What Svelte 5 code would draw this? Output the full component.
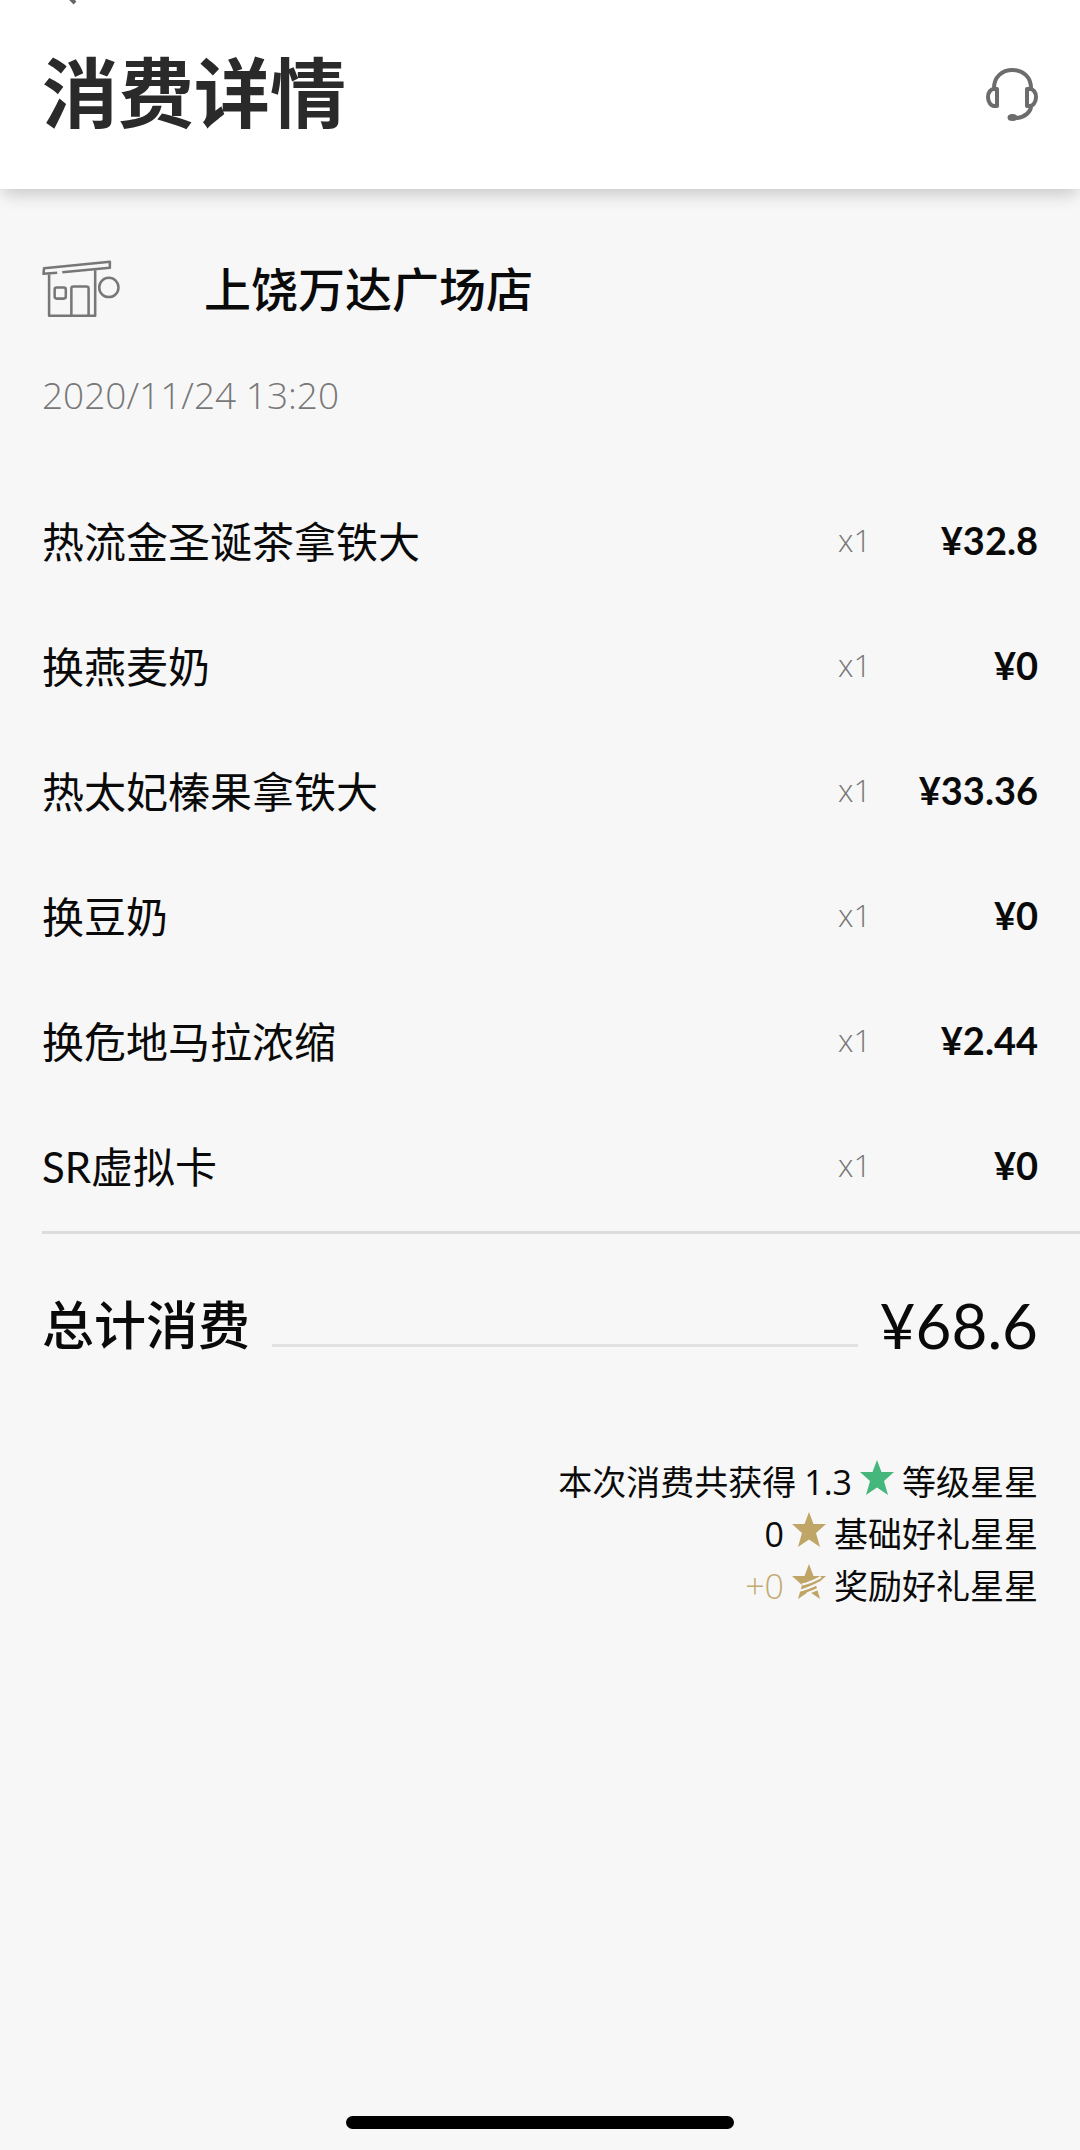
<script>
  const items = [
    { name: '热流金圣诞茶拿铁大', count: 'x1', price: '¥32.8' },
    { name: '换燕麦奶', count: 'x1', price: '¥0' },
    { name: '热太妃榛果拿铁大', count: 'x1', price: '¥33.36' },
    { name: '换豆奶', count: 'x1', price: '¥0' },
    { name: '换危地马拉浓缩', count: 'x1', price: '¥2.44' },
    { name: 'SR虚拟卡', count: 'x1', price: '¥0' }
  ];
  const rewards = [
    { text: '本次消费共获得', amount: '1.3', kind: 'level', label: '等级星星' },
    { text: '', amount: '0', kind: 'base', label: '基础好礼星星' },
    { text: '', amount: '+0', kind: 'bonus', label: '奖励好礼星星' }
  ];
</script>

<div class="page">
  <header>
    <button class="back" aria-label="返回">
      <svg width="16" height="6" viewBox="0 0 16 6" fill="none" stroke="#666" stroke-width="4"><path d="M1 -5 9 3" /></svg>
    </button>
    <div class="bar">
      <h1>消费详情</h1>
      <button class="help" aria-label="客服">
        <svg width="52" height="54" viewBox="0 0 52 54" fill="none" stroke="#6c6c6c" stroke-width="4" stroke-linecap="round" stroke-linejoin="round">
          <path d="M8 21C8 10 16 3 26.500 3S45 10 45 21" />
          <path d="M11 22v17H8c-3 0-6-4-6-9s3-8 6-8z" />
          <path d="M41 22h3c3 0 6 3 6 8s-3 9-6 9h-3z" />
          <path d="M45 39c0 6-6 11-14 12" />
          <ellipse cx="26.500" cy="50.500" rx="3" ry="1.500" fill="#6c6c6c" />
        </svg>
      </button>
    </div>
  </header>

  <main>
    <section class="store">
      <svg width="79" height="59" viewBox="0 0 78 58" fill="none" stroke="#777" stroke-width="2.500" stroke-linejoin="round">
        <path d="M15 12.500 1.500 13.500 2 8 67 1.500V7.500L20 12" />
        <path d="M7 14V55H52.500V10" />
        <rect x="12.500" y="27" width="11" height="11" rx="2" />
        <path d="M29 55V28q0-2 2-2H44q2 0 2 2V55" />
        <circle cx="66" cy="27" r="9.500" />
      </svg>
      <h2>上饶万达广场店</h2>
    </section>
    <time datetime="2020-11-24T13:20">2020/11/24 13:20</time>

    <table>
      <tbody>
        {#each items as item}
          <tr>
            <td>{item.name}</td>
            <td class="count">{item.count}</td>
            <td class="price">{item.price}</td>
          </tr>
        {/each}
      </tbody>
    </table>

    <section class="total">
      <h3>总计消费</h3>
      <span class="rule"></span>
      <strong>{'¥68.6'}</strong>
    </section>

    <ul>
      {#each rewards as reward}
        <li class={reward.kind}>
          {#if reward.text}<span>{reward.text}</span>{/if}
          <span class="amount">{reward.amount}</span>
          <svg width="34" height="36" viewBox="0 0 34 36">
            <path class="star" d="M17 0 21.500 12H34L24 21 28 35 17 27.500 6 35 10 21 0 12H12.500Z" />
            {#if reward.kind === 'bonus'}
              <path class="stripe" d="M10 20.500Q18 19 29 13M6 27Q16 25 28 18.500M15 29.500 26 25" />
            {/if}
          </svg>
          <span>{reward.label}</span>
        </li>
      {/each}
    </ul>
  </main>

  <div class="home"></div>
</div>

<style>
  :global(body) {
    background: #f7f7f7;
  }
  .page {
    min-height: 100vh;
    display: flex;
    flex-direction: column;
    font-family: Lato, "Noto Sans CJK SC", sans-serif;
    color: #0a0a0a;
  }
  h1, h2, h3, ul {
    margin: 0;
    padding: 0;
  }
  button {
    border: 0;
    padding: 0;
    background: none;
    display: block;
  }
  svg {
    display: block;
    flex: none;
  }
  header {
    background: #fff;
    box-shadow: 0 8px 16px -3px rgba(0, 0, 0, 0.2);
  }
  .back {
    margin-left: 66px;
  }
  .bar {
    display: flex;
    align-items: flex-start;
    justify-content: space-between;
    padding: 31px 42px 40px;
  }
  .help {
    margin-top: 30px;
  }
  h1 {
    font-size: 76px;
    line-height: 112px;
    font-weight: 700;
    color: #2a2a2a;
  }
  main {
    padding: 0 42px;
  }
  .store {
    display: flex;
    align-items: center;
    gap: 83px;
    padding-top: 64px;
  }
  h2 {
    font-size: 47px;
    line-height: 72px;
    font-weight: 500;
  }
  time {
    display: block;
    margin-top: 45px;
    font-family: "Open Sans", sans-serif;
    font-size: 37px;
    line-height: 50px;
    font-weight: 300;
    color: #787878;
  }
  table {
    width: 100%;
    border-collapse: collapse;
    margin-top: 57px;
  }
  td {
    height: 125px;
    padding: 0;
    font-size: 42px;
  }
  .count {
    width: 60px;
    font-family: "Open Sans", sans-serif;
    font-size: 31px;
    font-weight: 300;
    color: #787878;
  }
  .price {
    width: 140px;
    font-size: 38px;
    font-weight: 700;
    text-align: right;
  }
  .total {
    display: flex;
    align-items: center;
    gap: 22px;
    margin: 4px -42px 0 0;
    padding: 51px 42px 0 0;
    border-top: 3px solid #dcdcdc;
  }
  h3 {
    font-size: 52px;
    line-height: 80px;
    font-weight: 500;
  }
  .rule {
    flex: 1;
    align-self: flex-end;
    height: 3px;
    margin-bottom: 18px;
    background: #e2e2e2;
  }
  strong {
    font-size: 62px;
    line-height: 80px;
    font-weight: 400;
  }
  ul {
    list-style: none;
    margin-top: 91px;
    font-size: 34px;
    line-height: 52px;
  }
  li {
    display: flex;
    align-items: center;
    justify-content: flex-end;
    gap: 8px;
  }
  li svg {
    margin-bottom: 8px;
  }
  .amount {
    font-family: "Open Sans", sans-serif;
  }
  .level .star {
    fill: #46b77c;
  }
  .star {
    fill: #bfa566;
  }
  .stripe {
    fill: none;
    stroke: #f7f7f7;
    stroke-width: 2;
  }
  .bonus .amount {
    color: #c2aa70;
    font-weight: 300;
  }
  .home {
    width: 36%;
    height: 13px;
    margin: auto auto 21px;
    border-radius: 7px;
    background: #000;
  }
</style>
